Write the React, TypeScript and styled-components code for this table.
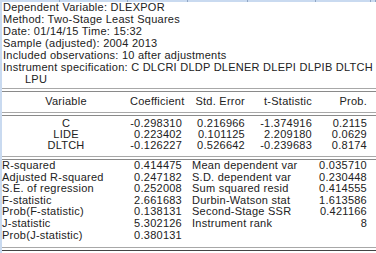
import React from "react";
import styled, { createGlobalStyle } from "styled-components";

const Global = createGlobalStyle`
  html, body { margin: 0; padding: 0; background: #fff; }
  body {
    font-family: "Liberation Sans", Arial, sans-serif;
    font-size: 11px;
    letter-spacing: 0.25px;
    color: #222;
  }
`;

const Frame = styled.div`
  width: 376px;
  height: 253px;
  overflow: hidden;
  display: flex;
  flex-direction: column;
  background: #fff;
`;

const HeaderStrip = styled.div`
  height: 2px;
  flex: none;
  display: grid;
  grid-template-columns: 60px 68px 60px 60px 68px 55px 5px;
  background: #c9daf0;
`;

const HeaderCell = styled.div`
  border-right: 1px solid #8fa6c4;
`;

const Body = styled.div`
  flex: 1;
  display: flex;
  border-left: 2px solid #c9daf0;
`;

const Sheet = styled.div`
  flex: 1;
  display: flex;
  flex-direction: column;
`;

const Info = styled.div`
  display: flex;
  flex-direction: column;
  margin-top: -1px;
  padding-left: 1px;
  padding-bottom: 3px;
`;

const InfoLine = styled.div<{ $indent?: boolean }>`
  height: 12px;
  line-height: 12px;
  white-space: nowrap;
  padding-left: ${(p) => (p.$indent ? "22px" : "0")};
`;

const DoubleRule = styled.div<{ $dark?: boolean }>`
  height: 4px;
  flex: none;
  border-top: 1px solid #a8a8a8;
  border-bottom: 1px solid ${(p) => (p.$dark ? "#444" : "#8a8a8a")};
  box-sizing: border-box;
`;

const Grid = styled.div`
  display: grid;
  grid-template-columns: 128px 52px 63px 67px 55px;
`;

const Cell = styled.div<{ $align?: string }>`
  height: 11px;
  line-height: 11px;
  white-space: nowrap;
  text-align: ${(p) => p.$align ?? "right"};
`;

const HeadGrid = styled(Grid)`
  padding: 4px 0 5px;
`;

const CoefGrid = styled(Grid)`
  padding: 2px 0 5px;
`;

const StatsGrid = styled.div`
  display: grid;
  grid-template-columns: 118px 62px 10px 108px 67px;
  padding: 0 0 6px;
`;

const StatCell = styled.div<{ $align?: string }>`
  height: 11.6px;
  line-height: 11.6px;
  white-space: nowrap;
  text-align: ${(p) => p.$align ?? "left"};
`;

const info = [
  "Dependent Variable: DLEXPOR",
  "Method: Two-Stage Least Squares",
  "Date: 01/14/15   Time: 15:32",
  "Sample (adjusted): 2004 2013",
  "Included observations: 10 after adjustments",
  "Instrument specification: C DLCRI DLDP DLENER DLEPI DLPIB DLTCH",
];

const coefs = [
  ["C", "-0.298310", "0.216966", "-1.374916", "0.2115"],
  ["LIDE", "0.223402", "0.101125", "2.209180", "0.0629"],
  ["DLTCH", "-0.126227", "0.526642", "-0.239683", "0.8174"],
];

const stats: [string, string, string, string][] = [
  ["R-squared", "0.414475", "Mean dependent var", "0.035710"],
  ["Adjusted R-squared", "0.247182", "S.D. dependent var", "0.230448"],
  ["S.E. of regression", "0.252008", "Sum squared resid", "0.414555"],
  ["F-statistic", "2.661683", "Durbin-Watson stat", "1.613586"],
  ["Prob(F-statistic)", "0.138131", "Second-Stage SSR", "0.421166"],
  ["J-statistic", "5.302126", "Instrument rank", "8"],
  ["Prob(J-statistic)", "0.380131", "", ""],
];

export default function App() {
  return (
    <Frame>
      <Global />
      <HeaderStrip>
        {Array.from({ length: 7 }).map((_, i) => (
          <HeaderCell key={i} />
        ))}
      </HeaderStrip>
      <Body>
        <Sheet>
          <Info>
            {info.map((t) => (
              <InfoLine key={t}>{t}</InfoLine>
            ))}
            <InfoLine $indent>LPU</InfoLine>
          </Info>
          <DoubleRule />
          <HeadGrid>
            <Cell $align="center">Variable</Cell>
            <Cell>Coefficient</Cell>
            <Cell>Std. Error</Cell>
            <Cell>t-Statistic</Cell>
            <Cell>Prob.  </Cell>
          </HeadGrid>
          <DoubleRule />
          <CoefGrid>
            {coefs.map((r) =>
              r.map((v, i) => (
                <Cell key={r[0] + i} $align={i === 0 ? "center" : "right"}>
                  {v}
                </Cell>
              ))
            )}
          </CoefGrid>
          <DoubleRule />
          <StatsGrid>
            {stats.map((r) => (
              <React.Fragment key={r[0]}>
                <StatCell>{r[0]}</StatCell>
                <StatCell $align="right">{r[1]}</StatCell>
                <StatCell />
                <StatCell>{r[2]}</StatCell>
                <StatCell $align="right">{r[3]}</StatCell>
              </React.Fragment>
            ))}
          </StatsGrid>
          <DoubleRule $dark />
        </Sheet>
      </Body>
    </Frame>
  );
}
